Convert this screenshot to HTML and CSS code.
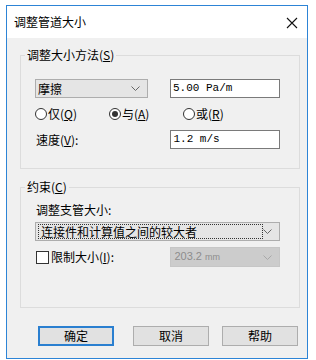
FILE: index.html
```html
<!DOCTYPE html>
<html>
<head>
<meta charset="utf-8">
<title>调整管道大小</title>
<link rel="stylesheet" href="styles.css">
</head>
<body>
<div class="window">
  <div class="titlebar">
    <span class="title">调整管道大小</span>
    <svg class="close" width="12" height="12" viewBox="0 0 12 12"><path d="M1 1L11 11M11 1L1 11" stroke="#111" stroke-width="1.1" fill="none"/></svg>
  </div>
  <div class="content">
    <fieldset class="group group-method">
      <legend>调整大小方法(<u>S</u>)</legend>
      <div class="row row-first">
        <div class="combo combo-small">
          <span class="combo-text">摩擦</span>
          <svg class="chevron" width="9" height="5" viewBox="0 0 9 5"><path d="M0.5 0.5L4.5 4.5L8.5 0.5" stroke="#666" fill="none"/></svg>
        </div>
        <div class="field">5.00 Pa/m</div>
      </div>
      <div class="row row-radios">
        <span class="radio"><span class="dot"></span>仅(<u>Q</u>)</span>
        <span class="radio"><span class="dot checked"></span>与(<u>A</u>)</span>
        <span class="radio"><span class="dot"></span>或(<u>R</u>)</span>
      </div>
      <div class="row row-speed">
        <span class="label">速度(<u>V</u>):</span>
        <div class="field">1.2 m/s</div>
      </div>
    </fieldset>

    <fieldset class="group group-limit">
      <legend>约束(<u>C</u>)</legend>
      <div class="caption">调整支管大小:</div>
      <div class="combo combo-wide">
        <span class="combo-text focus">连接件和计算值之间的较大者</span>
        <svg class="chevron" width="9" height="5" viewBox="0 0 9 5"><path d="M0.5 0.5L4.5 4.5L8.5 0.5" stroke="#666" fill="none"/></svg>
      </div>
      <div class="row row-check">
        <span class="check"><span class="box"></span>限制大小(<u>I</u>):</span>
        <div class="combo combo-disabled">
          <span class="combo-text">203.2 <small>mm</small></span>
          <svg class="chevron" width="9" height="5" viewBox="0 0 9 5"><path d="M0.5 0.5L4.5 4.5L8.5 0.5" stroke="#a8a8a8" fill="none"/></svg>
        </div>
      </div>
    </fieldset>

    <div class="buttons">
      <button class="btn btn-default">确定</button>
      <button class="btn btn-cancel">取消</button>
      <button class="btn btn-help">帮助</button>
    </div>
  </div>
</div>
</body>
</html>
```

FILE: styles.css
```css
body {
  margin: 0;
  background: #fff;
  font-family: "Noto Sans CJK SC", "Noto Sans", sans-serif;
  font-size: 12px;
  color: #000;
}
u {
  text-decoration: underline;
  text-underline-offset: 1px;
}

.window {
  margin: 5px 0 0 6px;
  width: 300px;
  border: 1px solid #2d84d6;
  background: #f0f0f0;
}
.titlebar {
  height: 32px;
  background: #fff;
  display: flex;
  align-items: center;
  justify-content: space-between;
  padding: 0 9px 0 7px;
}
.title {
  font-size: 12px;
  line-height: 16px;
}
.close {
  margin-top: 1px;
}

.content {
  padding: 0 7px 12px 13px;
}

.group {
  margin: 9px 0 0 0;
  padding: 0 19px 19px 14px;
  border: 1px solid #dcdcdc;
  min-width: 0;
}
.group legend {
  margin-left: -10px;
  padding: 0 2px;
  line-height: 16px;
  font-size: 12px;
}
.group-limit {
  margin-top: 10px;
  padding-bottom: 40px;
}

.row {
  display: flex;
  align-items: center;
}
.row-first {
  margin-top: 15px;
  gap: 22px;
}
.row-radios {
  margin-top: 8px;
  height: 16px;
}
.row-speed {
  margin-top: 8px;
}
.row-speed .label {
  width: 135px;
  padding-left: 1px;
  line-height: 16px;
}

.field {
  box-sizing: border-box;
  width: 110px;
  height: 19px;
  border: 1px solid #7a7a7a;
  background: #fff;
  font-family: "Liberation Mono", monospace;
  font-size: 11px;
  line-height: 17px;
  padding-left: 2px;
}

.combo {
  box-sizing: border-box;
  height: 19px;
  border: 1px solid #adadad;
  background: #e5e5e5;
  display: flex;
  align-items: center;
  justify-content: space-between;
  padding: 0 7px 0 2px;
}
.combo-small {
  width: 113px;
  margin-top: 1px;
}
.combo-text {
  line-height: 15px;
}
.combo-wide {
  width: 245px;
  margin-top: 4px;
  padding: 0 7px 0 2px;
}
.combo-wide .focus {
  box-sizing: border-box;
  width: 225px;
  height: 15px;
  border: 1px dotted #333;
  padding-left: 2px;
  line-height: 13px;
}
.combo-disabled {
  width: 110px;
  height: 20px;
  border-color: #c6c6c6;
  background: #cccccc;
  color: #8c8c8c;
  font-family: "Liberation Sans", sans-serif;
  font-size: 11px;
  padding-left: 3px;
}
.combo-disabled small {
  font-size: 9px;
}

.radio {
  display: flex;
  align-items: center;
  width: 74px;
  line-height: 16px;
}
.dot {
  box-sizing: border-box;
  width: 12px;
  height: 12px;
  border: 1px solid #333;
  border-radius: 50%;
  background: #fff;
  margin-right: 1px;
  display: flex;
  align-items: center;
  justify-content: center;
}
.dot.checked::after {
  content: "";
  width: 6px;
  height: 6px;
  border-radius: 50%;
  background: #333;
}

.caption {
  margin-top: 7px;
  line-height: 16px;
  padding-left: 1px;
}

.row-check {
  margin-top: 6px;
}
.check {
  display: flex;
  align-items: center;
  width: 135px;
  line-height: 16px;
  padding-left: 1px;
}
.box {
  box-sizing: border-box;
  width: 13px;
  height: 13px;
  border: 1px solid #333;
  background: #fff;
  margin-right: 2px;
}

.buttons {
  display: flex;
  margin-top: 18px;
  padding-left: 18px;
}
.btn {
  box-sizing: border-box;
  width: 76px;
  height: 20px;
  border: 1px solid #adadad;
  background: #e1e1e1;
  font-family: "Noto Sans CJK SC", sans-serif;
  font-size: 12px;
  line-height: 16px;
  padding: 0;
  color: #000;
}
.btn-default {
  border: 2px solid #2a7fd0;
}
.btn-cancel {
  margin-left: 19px;
}
.btn-help {
  margin-left: 13px;
}
```
